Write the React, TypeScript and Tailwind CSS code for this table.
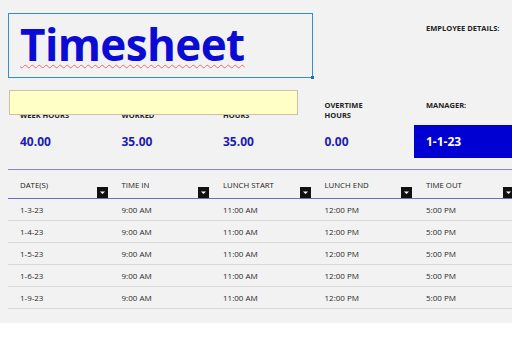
import React from "react";

const summary = [
  { top: "REGULAR WORK", bottom: "WEEK HOURS", value: "40.00" },
  { top: "TOTAL HOURS", bottom: "WORKED", value: "35.00" },
  { top: "TOTAL REGULAR", bottom: "HOURS", value: "35.00" },
  { top: "OVERTIME", bottom: "HOURS", value: "0.00" },
];

const columns = ["DATE(S)", "TIME IN", "LUNCH START", "LUNCH END", "TIME OUT"];

const rows = [
  ["1-3-23", "9:00 AM", "11:00 AM", "12:00 PM", "5:00 PM"],
  ["1-4-23", "9:00 AM", "11:00 AM", "12:00 PM", "5:00 PM"],
  ["1-5-23", "9:00 AM", "11:00 AM", "12:00 PM", "5:00 PM"],
  ["1-6-23", "9:00 AM", "11:00 AM", "12:00 PM", "5:00 PM"],
  ["1-9-23", "9:00 AM", "11:00 AM", "12:00 PM", "5:00 PM"],
];

function FilterButton() {
  return (
    <span className="absolute right-[2px] bottom-0 flex h-[11px] w-[11px] items-center justify-center bg-[#111]">
      <svg width="7" height="5" viewBox="0 0 7 5">
        <path d="M1 1.5 H6 L3.5 4 Z" fill="#fff" />
      </svg>
    </span>
  );
}

export default function App() {
  return (
    <div className="relative h-[348px] w-[512px] overflow-hidden bg-white font-['Open_Sans',sans-serif] text-[#222]">
      <div className="relative h-[323px] bg-[#f2f2f2] pl-[8px]">
        {/* Title and employee details */}
        <div className="grid grid-cols-[repeat(5,101.5px)] pt-[13px]">
          <div className="relative col-span-3 h-[65px] w-[305px] border border-[#2f8fd2]">
            <div className="pl-[11px] text-[44px] font-bold leading-[60px] tracking-[-0.6px] text-[#0b0bd3]">
              <span className="underline decoration-[#f06a6a] decoration-wavy decoration-1 underline-offset-[3px]">
                Timesheet
              </span>
            </div>
            <span className="absolute -bottom-[2px] -right-[2px] h-[3px] w-[3px] bg-[#1f6fb3]" />
          </div>
          <div className="col-start-5 pl-[12px] pt-[10px] text-[7.5px] font-bold leading-[10px] text-[#222]">
            EMPLOYEE DETAILS:
          </div>
        </div>

        {/* Summary labels */}
        <div className="mt-[22px] grid grid-cols-[repeat(5,101.5px)]">
          {summary.map((s) => (
            <div key={s.bottom + s.value + s.top} className="pl-[12px] text-[7.5px] font-bold leading-[10px] text-[#222]">
              <div>{s.top}</div>
              <div>{s.bottom}</div>
            </div>
          ))}
          <div className="pl-[12px] text-[7.5px] font-bold leading-[10px] text-[#222]">MANAGER:</div>
        </div>

        {/* Summary values */}
        <div className="mt-[5px] grid h-[33px] grid-cols-[repeat(5,101.5px)] items-center">
          {summary.map((s) => (
            <div key={s.top} className="pl-[12px] text-[12px] font-bold leading-[16px] text-[#1c1cb0]">
              {s.value}
            </div>
          ))}
          <div className="flex h-full w-[98px] items-center bg-[#0000d2] pl-[12px] text-[12px] font-bold leading-[16px] text-white">
            1-1-23
          </div>
        </div>

        {/* Time entries */}
        <div className="mt-[11px] w-[507.5px] border-t border-[#8b84c9]">
          <div className="grid h-[29px] grid-cols-[repeat(5,101.5px)] border-b border-[#6c6cc6]">
            {columns.map((c) => (
              <div key={c} className="relative pl-[12px] pt-[10px] text-[7.8px] leading-[10px] text-[#222]">
                {c}
                <FilterButton />
              </div>
            ))}
          </div>
          {rows.map((r) => (
            <div key={r[0]} className="grid h-[22px] grid-cols-[repeat(5,101.5px)] items-center border-b border-[#d9d9d9]">
              {r.map((cell, i) => (
                <div key={i} className="pl-[12px] text-[8px] leading-[10px] text-[#2a2a2a]">
                  {cell}
                </div>
              ))}
            </div>
          ))}
        </div>

        {/* Highlighted input overlay */}
        <div className="absolute left-[9px] top-[90px] h-[25px] w-[289px] border border-[#c9c2a4] bg-[#ffffc6]" />
      </div>
    </div>
  );
}
